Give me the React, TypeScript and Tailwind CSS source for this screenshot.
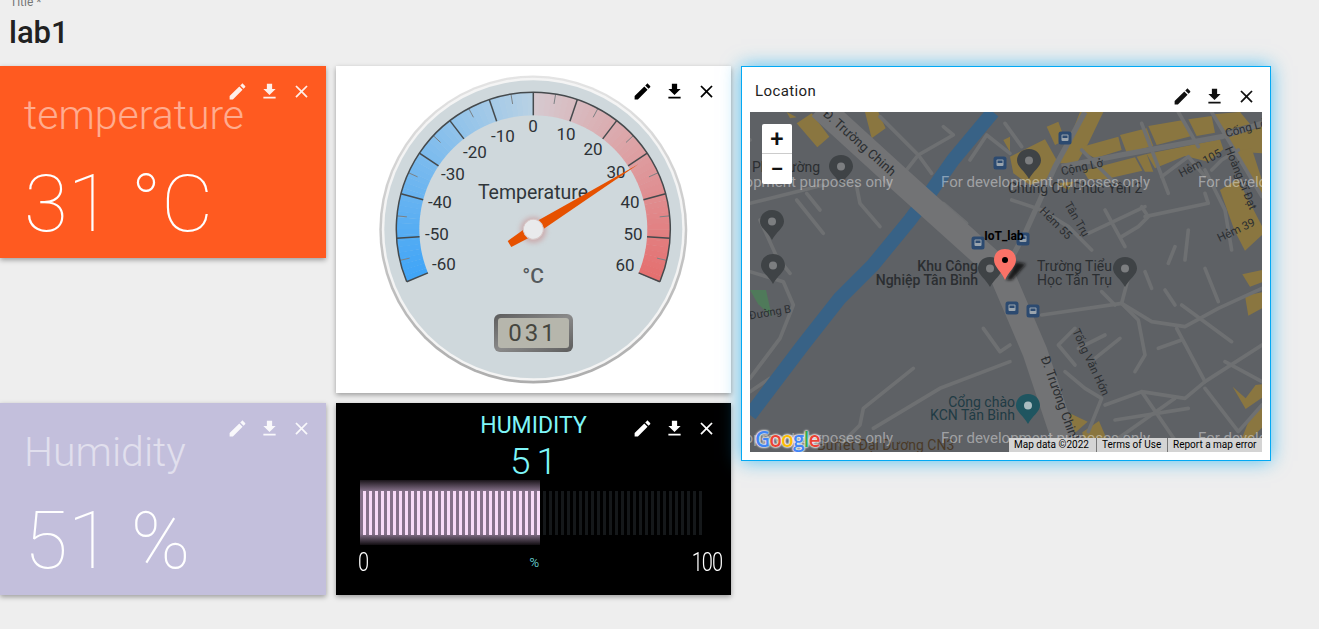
import React from 'react';

const pol = (r: number, deg: number): [number, number] => {
    const a = ((deg - 90) * Math.PI) / 180;
    return [r * Math.cos(a), r * Math.sin(a)];
};

const mix = (a: number[], b: number[], t: number) =>
    `rgb(${a.map((v, i) => Math.round(v + (b[i] - v) * t)).join(',')})`;

function ToolIcons({ className, tone }: { className: string; tone: string }) {
    return (
        <div className={`absolute flex gap-[11px] ${className}`}>
            <svg width="21" height="21" viewBox="0 0 24 24" className={tone} fill="currentColor">
                <path d="M3 17.25V21h3.75L17.81 9.94l-3.75-3.75L3 17.25zM20.71 7.04c.39-.39.39-1.02 0-1.41l-2.34-2.34c-.39-.39-1.02-.39-1.41 0l-1.83 1.83 3.75 3.75 1.83-1.83z" />
            </svg>
            <svg width="21" height="21" viewBox="0 0 24 24" className={tone} fill="currentColor">
                <path d="M19 9h-4V3H9v6H5l7 7 7-7zM5 18v2h14v-2H5z" />
            </svg>
            <svg width="21" height="21" viewBox="0 0 24 24" className={tone} fill="currentColor">
                <path d="M19 6.41L17.59 5 12 10.59 6.41 5 5 6.41 10.59 12 5 17.59 6.41 19 12 13.41 17.59 19 19 17.59 13.41 12 19 6.41z" />
            </svg>
        </div>
    );
}

function ValueCard({ title, value, bg, titleTone }: { title: string; value: string; bg: string; titleTone: string }) {
    return (
        <div className={`relative h-[192px] w-[326px] pl-[24px] pt-[25px] shadow-[0_2px_5px_rgba(0,0,0,0.35)] ${bg}`}>
            <div className={`text-[41px] font-light leading-[48px] whitespace-pre ${titleTone}`}>{title}</div>
            <div className="mt-[18px] text-[80px] font-thin leading-[94px] text-white whitespace-pre">{value}</div>
            <ToolIcons className="right-[14px] top-[15px]" tone="text-white opacity-90" />
        </div>
    );
}

function Gauge() {
    const labels: [string, number, number][] = [
        ['0', 197, 60], ['10', 230, 68], ['20', 257, 83], ['30', 280, 106], ['40', 294, 136], ['50', 297, 168], ['60', 289, 199],
        ['-10', 167, 70], ['-20', 139, 86], ['-30', 117, 108], ['-40', 104, 136], ['-50', 101, 168], ['-60', 108, 198],
    ];
    const blueA = [64, 165, 247];
    const blueB = [186, 210, 228];
    const redA = [214, 201, 207];
    const redB = [229, 110, 110];
    const slices = [];
    for (let d = -112.5; d < 112.5; d += 2.5) {
        const c = d < 0 ? mix(blueA, blueB, (d + 112.5) / 112.5) : mix(redA, redB, d / 112.5);
        const p = [pol(137, d), pol(137, d + 2.7), pol(114, d + 2.7), pol(114, d)];
        slices.push(<polygon key={d} points={p.map((q) => q.join(',')).join(' ')} fill={c} />);
    }
    const ticks = [];
    for (let i = 0; i <= 12; i++) {
        const d = -112.5 + i * 18.75;
        const a = pol(114, d);
        const b = pol(137, d);
        ticks.push(<line key={i} x1={a[0]} y1={a[1]} x2={b[0]} y2={b[1]} stroke="#454a4d" strokeWidth="1.5" />);
        if (i < 12) {
            const m = d + 9.375;
            const e = pol(127, m);
            const f = pol(137, m);
            ticks.push(<line key={`m${i}`} x1={e[0]} y1={e[1]} x2={f[0]} y2={f[1]} stroke="#7c8184" strokeWidth="1" />);
        }
    }
    const s = pol(137, -112.5);
    const t = pol(137, 112.5);
    return (
        <svg width="395" height="327" viewBox="0 0 395 327" className="block">
            <defs>
                <linearGradient id="rim" x1="0" y1="0" x2="0" y2="1">
                    <stop offset="0" stopColor="#e4e4e4" />
                    <stop offset="1" stopColor="#adadad" />
                </linearGradient>
                <linearGradient id="lcd" x1="0" y1="0" x2="1" y2="1">
                    <stop offset="0" stopColor="#5c5c5c" />
                    <stop offset="0.5" stopColor="#8a8a8a" />
                    <stop offset="1" stopColor="#5c5c5c" />
                </linearGradient>
                <filter id="soft" x="-50%" y="-50%" width="200%" height="200%">
                    <feGaussianBlur stdDeviation="2.5" />
                </filter>
            </defs>
            <circle cx="197.3" cy="163.5" r="154" fill="url(#rim)" />
            <circle cx="197.3" cy="163.3" r="151.5" fill="#f4f4f4" />
            <circle cx="197.3" cy="163.3" r="149" fill="#cfd8dc" />
            <g transform="translate(197.3 163.3)">
                {slices}
                {ticks}
                <path d={`M${s[0]} ${s[1]} A137 137 0 1 1 ${t[0]} ${t[1]}`} fill="none" stroke="#454a4d" strokeWidth="1.5" />
            </g>
            <g fontSize="17" fill="#2d3236" textAnchor="middle" dominantBaseline="central">
                {labels.map(([l, x, y]) => (
                    <text key={l} x={x} y={y}>{l}</text>
                ))}
            </g>
            <text x="197" y="126" fontSize="19.5" fill="#30363a" textAnchor="middle" dominantBaseline="central">Temperature</text>
            <text x="197" y="210" fontSize="21" fontWeight="500" fill="#555a5d" textAnchor="middle" dominantBaseline="central">°C</text>
            <rect x="158" y="248" width="79" height="38" rx="6" fill="url(#lcd)" />
            <rect x="162" y="252" width="71" height="30" rx="3" fill="#b6b6ac" />
            <text x="197" y="267" fontSize="24" letterSpacing="3" fill="#45463f" textAnchor="middle" dominantBaseline="central">031</text>
            <circle cx="197.3" cy="164" r="13" fill="#c88a8a" opacity="0.55" filter="url(#soft)" />
            <g transform="translate(197.3 163.3) rotate(58.2)">
                <polygon points="0,-123.5 5.5,0 3.5,28 -3.5,28 -5.5,0" fill="#e65100" />
                <circle r="10" fill="#e9eaec" stroke="#d8c9c9" strokeWidth="1" />
            </g>
        </svg>
    );
}

function HumidityPanel() {
    const bars = Array.from({ length: 57 }, (_, i) => i);
    return (
        <div className="relative flex h-[192px] w-[395px] flex-col items-center bg-black shadow-[0_2px_5px_rgba(0,0,0,0.35)]">
            <div className="mt-[8px] text-[23px] leading-[29px] text-[#7ff6f8]">HUMIDITY</div>
            <div className="ml-[6px] mt-[3px] text-[37px] font-light leading-[37px] tracking-[6px] text-[#7ff6f8]">51</div>
            <div className="relative h-[65px] w-full">
                <div className="absolute left-[24px] top-0 h-[65px] w-[180px] bg-[linear-gradient(to_bottom,#1a141a,#85718a_17%,#85718a_83%,#120e12)]" />
                <div className="relative ml-[27px] flex h-[65px] items-center gap-[3.5px]">
                    {bars.map((i) => (
                        <div key={i} className={i < 30 ? 'h-[44px] w-[2.5px] bg-[#f8daf8]' : 'h-[44px] w-[2.5px] bg-[#15181a]'} />
                    ))}
                </div>
            </div>
            <div className="mt-[2px] flex w-full items-center justify-between pl-[22px] pr-[9px] text-[20px] font-light leading-[20px] text-white">
                <span className="origin-top scale-y-125">0</span>
                <span className="ml-[8px] mt-[6px] text-[13px] text-[#7ff6f8]">%</span>
                <span className="origin-top scale-y-125 tracking-[-1px]">100</span>
            </div>
            <ToolIcons className="right-[14px] top-[15px]" tone="text-white" />
        </div>
    );
}

function Pin({ x, y, fill = '#3f4346', hole = '#7c7e80' }: { x: number; y: number; fill?: string; hole?: string }) {
    return (
        <g transform={`translate(${x} ${y})`}>
            <path d="M0 -13C-7.5 -13 -12 -7.5 -12 -1.5C-12 5 -4 9 0 17C4 9 12 5 12 -1.5C12 -7.5 7.5 -13 0 -13Z" fill={fill} />
            <circle cx="0" cy="-1.5" r="4" fill={hole} />
        </g>
    );
}

function Bus({ x, y }: { x: number; y: number }) {
    return (
        <g transform={`translate(${x} ${y})`}>
            <rect x="-6.5" y="-6.5" width="13" height="13" rx="2.5" fill="#2c4a70" />
            <rect x="-3.5" y="-3.5" width="7" height="6.5" rx="1" fill="#9aa4ad" />
            <rect x="-2.5" y="-2.5" width="5" height="2.5" fill="#2c4a70" />
        </g>
    );
}

function MapView() {
    const road = '#6e7072';
    const yellowA = ['140,156 170,172 150,175', '170,190 215,160 268,230 232,262', '375,156 415,156 437,205 395,235', '790,240 810,230 810,275'];
    const yellowB = [
        '225,156 295,156 250,250 215,310 165,310',
        '240,258 340,230 350,270 270,295 235,275',
        '345,225 425,205 445,258 365,278',
        '430,198 535,180 560,228 455,255',
        '550,178 620,168 630,218 575,228',
        '625,163 705,156 735,192 660,212',
        '660,235 771,200 771,280 700,275',
        '425,282 645,238 655,268 610,305 540,288 450,325',
        '395,290 425,282 445,335 420,335',
        '235,332 390,292 412,332 300,358 250,358',
        '15,290 120,238 155,300 135,352 75,375 25,340',
        '125,200 160,185 180,240 150,255',
        '685,275 740,265 771,360 771,415',
        '645,390 698,358 771,498 771,525 720,572 688,510',
        '150,370 205,365 190,390',
    ];
    const yellowD = [
        '185,440 248,470 205,508',
        '232,502 282,468 315,545 240,562',
        '712,28 771,15 771,52 735,65',
        '730,152 771,130 771,82 720,92',
        '683,365 722,432 771,398 771,358 752,360 722,400',
        '695,562 771,488 771,418 730,470',
    ];
    const minorA = ['420,170 535,285 500,330', '535,285 575,340', '535,285 640,225 610,200', '30,430 250,375', '170,420 250,520', '200,400 240,450', '350,380 360,430 420,500', '610,430 680,490', '60,480 110,590 150,640', '690,300 740,225 810,280', '0,250 30,240'];
    const minorB = ['410,190 490,400', '520,156 580,260', '620,156 670,240 771,410', '470,350 550,290 600,350', '410,440 430,470 400,500 350,530', '600,400 610,430 420,470', '300,450 360,560', '250,520 420,440', '230,270 330,370', '20,420 110,450 190,500 260,570', '600,330 660,450 680,570', '550,510 540,600', '510,560 490,610', '700,270 650,300 620,330', '0,190 50,260'];
    const minorC = ['30,20 130,50 160,120 120,220 30,340', '520,310 370,430 360,480 300,540', '400,490 600,370 810,290', '730,190 780,260 810,240', '30,380 90,340'];
    const minorD = ['110,150 350,115 440,170 540,185 640,130 771,70', '350,115 400,165 420,270 390,320', '515,190 600,350 540,400 410,380 300,420', '600,350 771,240', '530,120 680,230', '460,250 530,225', '210,190 160,240 210,300', '220,250 300,210', '270,280 345,220', '180,320 240,370 290,400 250,500', '410,380 520,540', '330,465 550,430', '340,520 510,400', '660,290 771,350', '600,370 700,500 771,420', '480,75 510,120', '600,10 640,110', '380,0 350,115', '290,80 330,120', '420,20 440,70'];
    const lines = (items: string[], w: number) =>
        items.map((p) => <polyline key={p} points={p} fill="none" stroke={road} strokeWidth={w} strokeLinecap="round" strokeLinejoin="round" />);
    return (
        <div className="relative h-[340px] w-[512px] overflow-hidden bg-[#5e6165]">
            <svg width="512" height="340" viewBox="0 0 512 340" className="block">
                <defs>
                    <filter id="pinShadow" x="-50%" y="-50%" width="200%" height="200%">
                        <feGaussianBlur stdDeviation="1.5" />
                    </filter>
                </defs>
                <g transform="translate(-10 -52) scale(0.3333)">
                    {yellowA.map((p) => <polygon key={p} points={p} fill="#8a7640" />)}
                    {lines(minorA, 11)}
                </g>
                <g transform="translate(255 -52) scale(0.3333)">
                    {yellowB.map((p) => <polygon key={p} points={p} fill="#8a7640" />)}
                    {lines(minorB, 11)}
                    <polyline points="170,320 350,285 650,230 771,190" fill="none" stroke={road} strokeWidth="16" />
                    <polyline points="240,156 150,320 60,520 0,630" fill="none" stroke={road} strokeWidth="16" />
                </g>
                <g transform="translate(-10 153) scale(0.3333)">{lines(minorC, 11)}</g>
                <g transform="translate(255 153) scale(0.3333)">
                    {yellowD.map((p) => <polygon key={p} points={p} fill="#8a7640" />)}
                    {lines(minorD, 11)}
                </g>
                <polygon points="0,178 16,178 22,205 8,192" fill="#4f7a5a" />
                <polyline points="0,303 53,233 90,186 123,153 160,108 180,81 203,48 243,0" fill="none" stroke="#386286" strokeWidth="14" />
                <polyline points="70,-5 150,68 250,158 285,240 320,345" fill="none" stroke="#727375" strokeWidth="25" />

                <Pin x={91} y={56} />
                <Pin x={22} y={111} />
                <Pin x={23} y={155} />
                <Pin x={279} y={50} />
                <Pin x={240} y={158} />
                <Pin x={375} y={158} />
                <Pin x={278} y={295} fill="#1f5560" hole="#a9bcc0" />
                <Bus x={250} y={51} />
                <Bus x={315} y={26} />
                <Bus x={228} y={131} />
                <Bus x={273} y={127} />
                <Bus x={262} y={196} />
                <Bus x={283} y={199} />

                <g fontFamily="Roboto, sans-serif" fill="#2b2e31">
                    <text x="75" y="0" fontSize="13" transform="rotate(42 75 0)" dy="4">Đ. Trường Chinh</text>
                    <text x="2" y="60" fontSize="14">Phi Trường</text>
                    <text x="258" y="81" fontSize="14">Chung Cư Phúc Yên 2</text>
                    <text x="332" y="59" fontSize="11.5" textAnchor="middle" transform="rotate(-12 332 55)">Cộng Lở</text>
                    <text x="496" y="20" fontSize="11.5" textAnchor="middle" transform="rotate(-15 496 16)">Cống Lở</text>
                    <text x="450" y="55" fontSize="11.5" textAnchor="middle" transform="rotate(-28 450 51)">Hẻm 105</text>
                    <text x="491" y="70" fontSize="11.5" textAnchor="middle" transform="rotate(68 491 66)">Hoàng Sĩ Đạt</text>
                    <text x="486" y="122" fontSize="11.5" textAnchor="middle" transform="rotate(-25 486 118)">Hẻm 39</text>
                    <text x="306" y="115" fontSize="11.5" textAnchor="middle" transform="rotate(45 306 111)">Hẻm 55</text>
                    <text x="327" y="111" fontSize="11.5" textAnchor="middle" transform="rotate(60 327 107)">Tân Trụ</text>
                    <text x="341" y="254" fontSize="11.5" textAnchor="middle" transform="rotate(65 341 250)">Tống Văn Hớn</text>
                    <text x="310" y="292" fontSize="13" textAnchor="middle" transform="rotate(70 310 288)">Đ. Trường Chinh</text>
                    <text x="20" y="204" fontSize="11" textAnchor="middle" transform="rotate(-10 20 200)">Đường B</text>
                    <text x="228" y="159" fontSize="14" fontWeight="500" textAnchor="end">Khu Công</text>
                    <text x="228" y="173" fontSize="14" fontWeight="500" textAnchor="end">Nghiệp Tân Bình</text>
                    <text x="287" y="159" fontSize="14">Trường Tiểu</text>
                    <text x="287" y="173" fontSize="14">Học Tân Trụ</text>
                    <text x="265" y="295" fontSize="14" textAnchor="end" fill="#1f3b44">Cổng chào</text>
                    <text x="265" y="308" fontSize="14" textAnchor="end" fill="#1f3b44">KCN Tân Bình</text>
                    <text x="67" y="338" fontSize="14" fill="#4a3a28">Buffet Đại Dương CN3</text>
                    <text x="254" y="128" fontSize="12" fontWeight="700" fill="#000" textAnchor="middle">IoT_lab</text>
                </g>

                <polygon points="256,168 266,150 276,152 262,168" fill="#111" opacity="0.85" filter="url(#pinShadow)" />
                <path d="M255 137C247 137 244 143 244 148C244 155 252 160 255 168C258 160 266 155 266 148C266 143 263 137 255 137Z" fill="#fb7267" />
                <circle cx="255" cy="148" r="3" fill="#000" />

                <g fontFamily="Roboto, sans-serif" fontSize="15" fill="#fff" fillOpacity="0.42">
                    <text x="-66" y="75">For development purposes only</text>
                    <text x="191" y="75">For development purposes only</text>
                    <text x="448" y="75">For development purposes only</text>
                    <text x="-66" y="331">For development purposes only</text>
                    <text x="191" y="331">For development purposes only</text>
                    <text x="448" y="331">For development purposes only</text>
                </g>
            </svg>
            <div className="absolute left-[12px] top-[12px] flex h-[60px] w-[30px] flex-col rounded-[2px] bg-white text-[#111]">
                <div className="flex h-[30px] items-center justify-center border-b border-[#ccc] text-[24px] font-medium leading-none">+</div>
                <div className="flex h-[30px] items-center justify-center text-[24px] font-medium leading-none">−</div>
            </div>
            <div className="absolute bottom-[-1px] left-[5px] font-['Open_Sans',sans-serif] text-[21px] font-semibold leading-[28px] tracking-[-1px] [text-shadow:0_0_2px_#fff,0_0_2px_#fff,0_0_3px_#fff]">
                <span className="text-[#4285f4]">G</span>
                <span className="text-[#ea4335]">o</span>
                <span className="text-[#fbbc05]">o</span>
                <span className="text-[#4285f4]">g</span>
                <span className="text-[#34a853]">l</span>
                <span className="text-[#ea4335]">e</span>
            </div>
            <div className="absolute bottom-0 right-0 flex h-[14px] items-center bg-[#d4d4d4] text-[10px] leading-[14px] text-black">
                <span className="w-[87px] pl-[5px]">Map data ©2022</span>
                <span className="w-[71px] border-l border-[#777] pl-[5px]">Terms of Use</span>
                <span className="w-[95px] border-l border-[#777] pl-[5px]">Report a map error</span>
            </div>
        </div>
    );
}

export default function App() {
    return (
        <div className="h-screen overflow-hidden bg-[#eeeeee] font-['Roboto',sans-serif]">
            <div className="flex h-[66px] flex-col pl-[10px]">
                <div className="-mt-[5px] text-[12px] leading-[14px] text-[#777]">Title *</div>
                <div className="-ml-[1px] mt-[6px] text-[31px] font-medium leading-[36px] text-[#212121]">lab1</div>
            </div>
            <div className="flex gap-[10px]">
                <div className="flex flex-col gap-[145px]">
                    <ValueCard title="temperature" value="31 °C" bg="bg-[#ff5a20]" titleTone="text-white/50" />
                    <ValueCard title="Humidity" value="51 %" bg="bg-[#c3bfdc]" titleTone="text-white/50" />
                </div>
                <div className="flex flex-col gap-[10px]">
                    <div className="relative h-[327px] w-[395px] bg-white shadow-[0_2px_5px_rgba(0,0,0,0.35)]">
                        <Gauge />
                        <ToolIcons className="right-[14px] top-[15px]" tone="text-black" />
                    </div>
                    <HumidityPanel />
                </div>
                <div className="relative h-[395px] w-[530px] self-start border border-[#03a9f4] bg-white px-[8px] pt-[45px] shadow-[0_0_18px_rgba(3,169,244,0.65)]">
                    <div className="absolute left-[13px] top-[15px] text-[15px] leading-[18px] tracking-[0.4px] text-[#222]">Location</div>
                    <ToolIcons className="right-[13px] top-[19px]" tone="text-[#111]" />
                    <MapView />
                </div>
            </div>
        </div>
    );
}
